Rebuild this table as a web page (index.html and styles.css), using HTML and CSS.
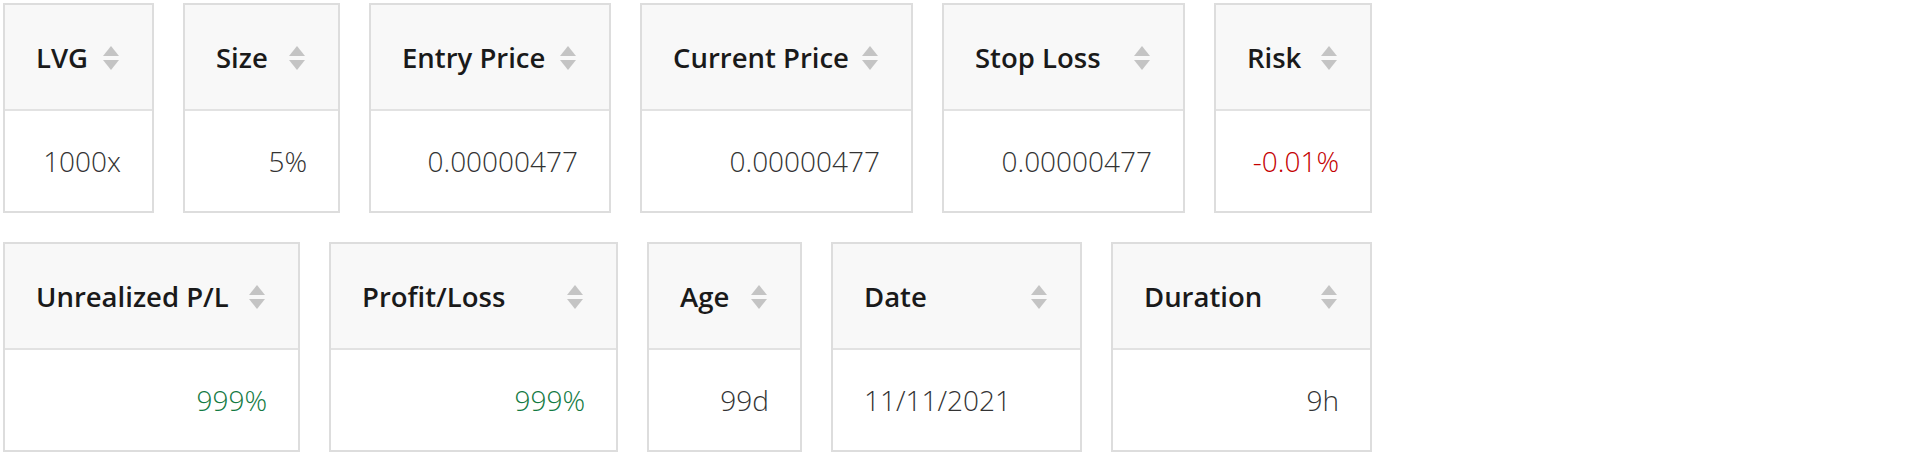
FILE: index.html
```html
<!DOCTYPE html>
<html lang="en">
<head>
<meta charset="utf-8">
<title>Position metrics</title>
<link rel="stylesheet" href="styles.css">
</head>
<body>
<div class="board">
  <div class="metric-row">
    <div class="metric metric--lvg">
      <div class="metric-head"><span class="metric-label">LVG</span><span class="sort"><i class="sort-up"></i><i class="sort-down"></i></span></div>
      <div class="metric-value">1000x</div>
    </div>
    <div class="metric metric--size">
      <div class="metric-head"><span class="metric-label">Size</span><span class="sort"><i class="sort-up"></i><i class="sort-down"></i></span></div>
      <div class="metric-value">5%</div>
    </div>
    <div class="metric metric--entry">
      <div class="metric-head"><span class="metric-label">Entry Price</span><span class="sort"><i class="sort-up"></i><i class="sort-down"></i></span></div>
      <div class="metric-value">0.00000477</div>
    </div>
    <div class="metric metric--current">
      <div class="metric-head"><span class="metric-label">Current Price</span><span class="sort"><i class="sort-up"></i><i class="sort-down"></i></span></div>
      <div class="metric-value">0.00000477</div>
    </div>
    <div class="metric metric--stop">
      <div class="metric-head"><span class="metric-label">Stop Loss</span><span class="sort"><i class="sort-up"></i><i class="sort-down"></i></span></div>
      <div class="metric-value">0.00000477</div>
    </div>
    <div class="metric metric--risk">
      <div class="metric-head"><span class="metric-label">Risk</span><span class="sort"><i class="sort-up"></i><i class="sort-down"></i></span></div>
      <div class="metric-value negative">-0.01%</div>
    </div>
  </div>
  <div class="metric-row">
    <div class="metric metric--upl">
      <div class="metric-head"><span class="metric-label">Unrealized P/L</span><span class="sort"><i class="sort-up"></i><i class="sort-down"></i></span></div>
      <div class="metric-value positive">999%</div>
    </div>
    <div class="metric metric--pl">
      <div class="metric-head"><span class="metric-label">Profit/Loss</span><span class="sort"><i class="sort-up"></i><i class="sort-down"></i></span></div>
      <div class="metric-value positive">999%</div>
    </div>
    <div class="metric metric--age">
      <div class="metric-head"><span class="metric-label">Age</span><span class="sort"><i class="sort-up"></i><i class="sort-down"></i></span></div>
      <div class="metric-value">99d</div>
    </div>
    <div class="metric metric--date">
      <div class="metric-head"><span class="metric-label">Date</span><span class="sort"><i class="sort-up"></i><i class="sort-down"></i></span></div>
      <div class="metric-value align-left">11/11/2021</div>
    </div>
    <div class="metric metric--duration">
      <div class="metric-head"><span class="metric-label">Duration</span><span class="sort"><i class="sort-up"></i><i class="sort-down"></i></span></div>
      <div class="metric-value">9h</div>
    </div>
  </div>
</div>
</body>
</html>
```
FILE: styles.css
```css
* { box-sizing: border-box; }

html, body {
  margin: 0;
  background: #ffffff;
  font-family: "Open Sans", "Noto Sans", "Liberation Sans", sans-serif;
}

.board {
  padding: 3px;
  display: flex;
  flex-direction: column;
  gap: 29px;
}

.metric-row {
  display: flex;
  gap: 29px;
}

.metric {
  border: 2px solid #dddddd;
  display: flex;
  flex-direction: column;
}

.metric-head {
  height: 106px;
  background: #f8f8f8;
  border-bottom: 2px solid #e2e2e2;
  display: flex;
  align-items: center;
  justify-content: space-between;
  padding: 0 33px 0 31px;
}

.metric-label {
  font-size: 27.5px;
  font-weight: 600;
  color: #1a1a1a;
  white-space: nowrap;
}

.sort {
  display: flex;
  flex-direction: column;
  align-items: center;
  gap: 4px;
  width: 16px;
  flex: none;
  margin-top: 2px;
}

.sort i {
  display: block;
  width: 0;
  height: 0;
  border-left: 8px solid transparent;
  border-right: 8px solid transparent;
}

.sort-up { border-bottom: 10px solid #c4c4c4; }
.sort-down { border-top: 10px solid #c4c4c4; }

.metric-value {
  height: 100px;
  display: flex;
  align-items: center;
  justify-content: flex-end;
  padding: 0 31px 0 31px;
  font-size: 28px;
  font-weight: 300;
  color: #333333;
  white-space: nowrap;
}

.metric-value.align-left { justify-content: flex-start; }
.metric-value.negative { color: #c40000; }
.metric-value.positive { color: #137a43; }

.metric--lvg { width: 151px; }
.metric--size { width: 157px; }
.metric--entry { width: 242px; }
.metric--current { width: 273px; }
.metric--stop { width: 243px; }
.metric--risk { width: 158px; }

.metric--upl { width: 297px; }
.metric--pl { width: 289px; }
.metric--age { width: 155px; }
.metric--date { width: 251px; }
.metric--duration { width: 261px; }
```
